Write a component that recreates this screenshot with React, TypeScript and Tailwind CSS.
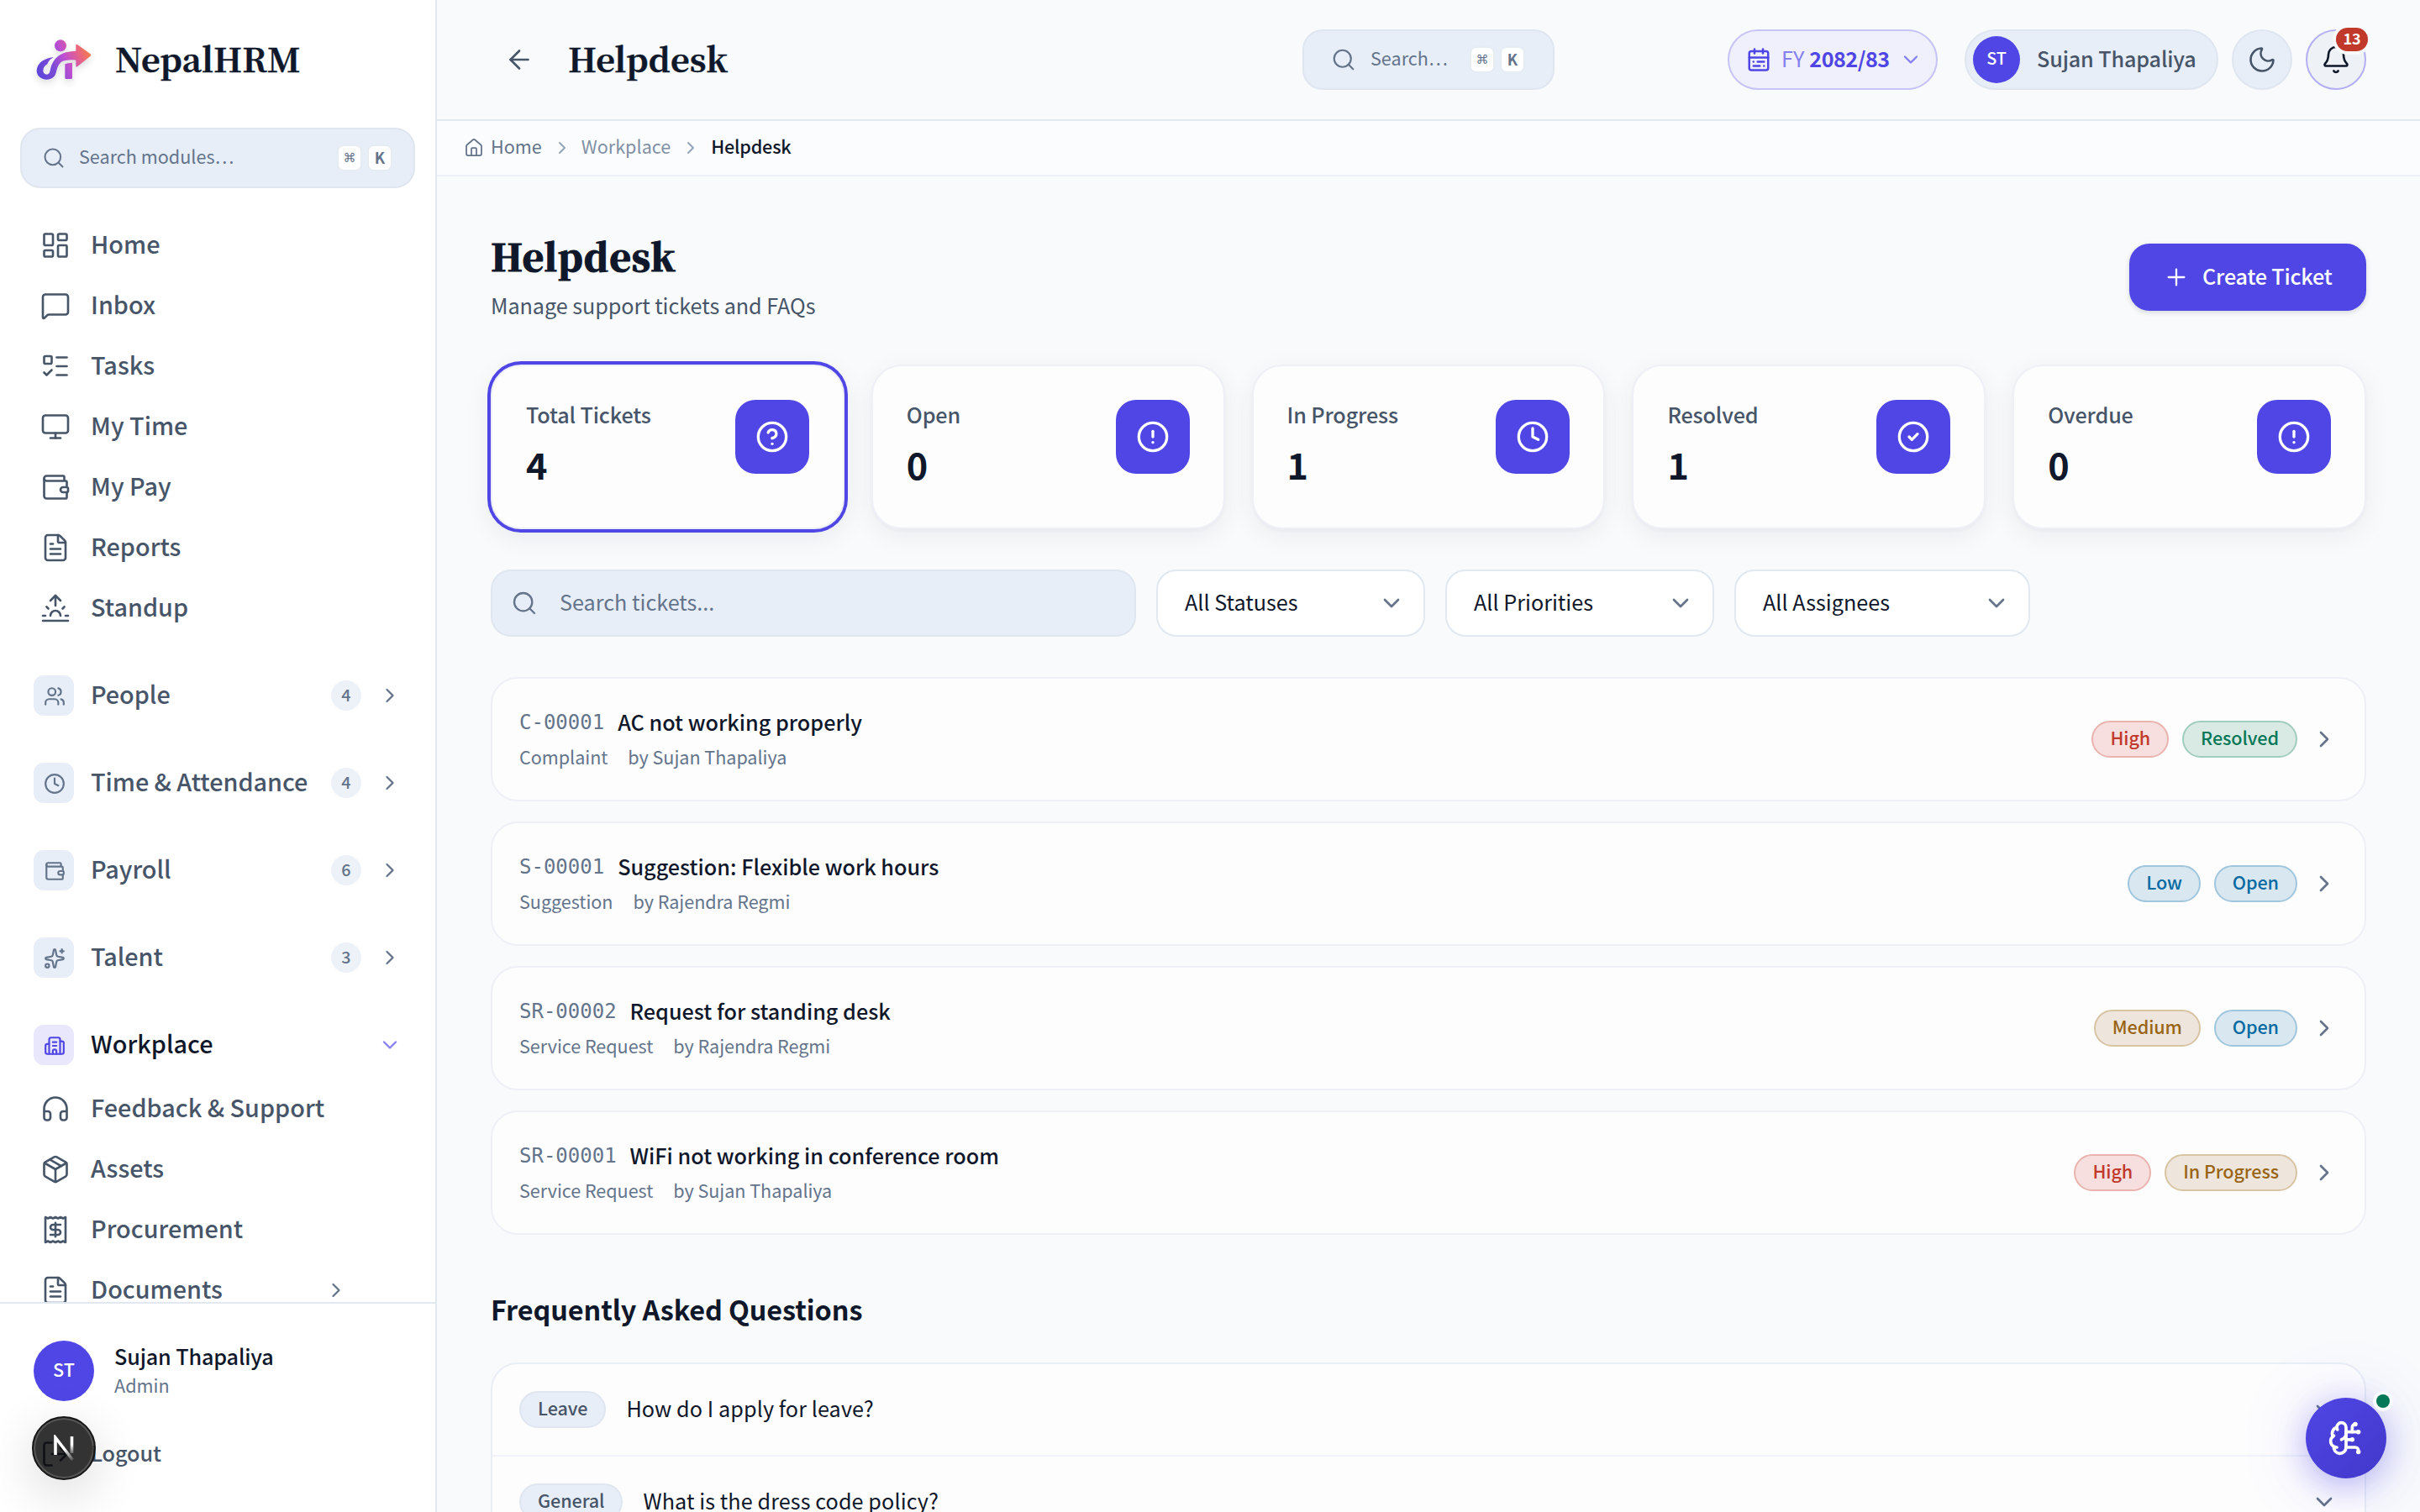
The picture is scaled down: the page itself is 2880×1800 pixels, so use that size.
import { ReactNode } from "react";
import {
  ArrowLeft,
  Bell,
  BrainCircuit,
  Building2,
  CalendarRange,
  ChevronDown,
  ChevronRight,
  CircleAlert,
  CircleCheck,
  CircleQuestionMark,
  Clock,
  FileText,
  Headphones,
  House,
  LayoutDashboard,
  ListTodo,
  LogOut,
  MessageSquare,
  Monitor,
  Moon,
  Package,
  Plus,
  Receipt,
  Search,
  Sparkles,
  Sunrise,
  Users,
  Wallet,
} from "lucide-react";
import clsx from "clsx";

const navigation = [
  { name: "Home", Icon: LayoutDashboard },
  { name: "Inbox", Icon: MessageSquare },
  { name: "Tasks", Icon: ListTodo },
  { name: "My Time", Icon: Monitor },
  { name: "My Pay", Icon: Wallet },
  { name: "Reports", Icon: FileText },
  { name: "Standup", Icon: Sunrise },
];

const groups = [
  { name: "People", count: 4, Icon: Users },
  { name: "Time & Attendance", count: 4, Icon: Clock },
  { name: "Payroll", count: 6, Icon: Wallet },
  { name: "Talent", count: 3, Icon: Sparkles },
];

const workplace = [
  { name: "Feedback & Support", Icon: Headphones },
  { name: "Assets", Icon: Package },
  { name: "Procurement", Icon: Receipt },
  { name: "Documents", Icon: FileText, nested: true },
];

const stats = [
  { label: "Total Tickets", value: 4, Icon: CircleQuestionMark, active: true },
  { label: "Open", value: 0, Icon: CircleAlert },
  { label: "In Progress", value: 1, Icon: Clock },
  { label: "Resolved", value: 1, Icon: CircleCheck },
  { label: "Overdue", value: 0, Icon: CircleAlert },
];

const filters = [
  { label: "All Statuses", width: "w-[320px]" },
  { label: "All Priorities", width: "w-[320px]" },
  { label: "All Assignees", width: "w-[352px]" },
];

const tones = {
  red: "bg-[#f6dfde] border-[#e9b3ae] text-[#c0392b]",
  green: "bg-[#d9eae4] border-[#a1cdbd] text-[#047857]",
  blue: "bg-[#d8e7f0] border-[#a0c6dd] text-[#0369a1]",
  amber: "bg-[#eee6dc] border-[#d8c3a3] text-[#996515]",
  gray: "bg-[#e7eef8] border-[#dfe6f0] text-[#475569]",
};

type Tone = keyof typeof tones;

const tickets: {
  id: string;
  title: string;
  type: string;
  by: string;
  pills: [string, Tone][];
}[] = [
  {
    id: "C-00001",
    title: "AC not working properly",
    type: "Complaint",
    by: "Sujan Thapaliya",
    pills: [["High", "red"], ["Resolved", "green"]],
  },
  {
    id: "S-00001",
    title: "Suggestion: Flexible work hours",
    type: "Suggestion",
    by: "Rajendra Regmi",
    pills: [["Low", "blue"], ["Open", "blue"]],
  },
  {
    id: "SR-00002",
    title: "Request for standing desk",
    type: "Service Request",
    by: "Rajendra Regmi",
    pills: [["Medium", "amber"], ["Open", "blue"]],
  },
  {
    id: "SR-00001",
    title: "WiFi not working in conference room",
    type: "Service Request",
    by: "Sujan Thapaliya",
    pills: [["High", "red"], ["In Progress", "amber"]],
  },
];

const faqs = [
  { category: "Leave", question: "How do I apply for leave?" },
  { category: "General", question: "What is the dress code policy?" },
];

const serif = "font-['Noto_Serif_CJK_SC','Noto_Serif',serif]";

function Logo() {
  return (
    <svg
      width="68"
      height="52"
      viewBox="36 48 204 156"
      fill="none"
      className="drop-shadow-[0_4px_4px_rgba(15,23,42,0.15)] overflow-visible"
    >
      <defs>
        <linearGradient id="logo" x1="42" y1="180" x2="235" y2="90" gradientUnits="userSpaceOnUse">
          <stop offset="0" stopColor="#5b45d9" />
          <stop offset="0.3" stopColor="#7a4bd6" />
          <stop offset="0.55" stopColor="#c04fd0" />
          <stop offset="0.8" stopColor="#ea6480" />
          <stop offset="1" stopColor="#f5853c" />
        </linearGradient>
      </defs>
      <circle cx="126" cy="76" r="21" fill="url(#logo)" />
      <path
        d="M104 117C70 119 42 137 41 165c0 18 14 32 36 32 18 0 30-9 34-28 5-22 14-38 32-40 14-3 27-3 38-1v21q1 5 5 2l47-38q4-4 0-7l-47-34q-5-3-5 2v21c-24 1-47 5-64 19-14 11-23 27-27 46-2 14-6 19-13 19-8 0-13-6-13-13 0-12 6-18 15-24 4-12 12-20 25-26Z"
        fill="url(#logo)"
      />
      <path d="M142 142q8-5 26-5v54q0 4-4 4h-18q-4 0-4-4Z" fill="url(#logo)" />
    </svg>
  );
}

function Kbd({ children }: { children: ReactNode }) {
  return (
    <kbd className="flex items-center justify-center w-[30px] h-8 rounded-lg bg-white border-2 border-[#e6ecf4] text-[18px] leading-7 font-sans text-[#64748b]">
      {children}
    </kbd>
  );
}

function Shortcut() {
  return (
    <span className="flex gap-1.5">
      <Kbd>
        <span className="font-['DejaVu_Sans'] text-[15px] font-normal">⌘</span>
      </Kbd>
      <Kbd>
        <span className="font-['Noto_Sans_CJK_SC'] font-bold pb-0.5">K</span>
      </Kbd>
    </span>
  );
}

function Pill({ tone, children }: { tone: Tone; children: ReactNode }) {
  return (
    <span
      className={clsx(
        "h-11 px-5 pb-1 rounded-full border-2 text-[21.6px] leading-9 font-medium tracking-[-0.1px] whitespace-nowrap",
        tones[tone]
      )}
    >
      {children}
    </span>
  );
}

function Sidebar() {
  return (
    <aside className="flex flex-col w-[520px] h-full shrink-0 bg-white border-r-2 border-[#e2e8f0]">
      <div className="flex items-center gap-[27px] h-[144px] pl-[42px] pb-0.5 shrink-0">
        <Logo />
        <span
          className={clsx(
            serif,
            "text-[39.6px] leading-[56px] pb-1 font-bold text-[#0f172a] [-webkit-text-stroke:0.5px_#0f172a]"
          )}
        >
          NepalHRM
        </span>
      </div>
      <div className="px-6 pt-2 shrink-0">
        <div className="flex items-center h-[72px] pl-6 pr-[25px] rounded-[24px] bg-[#e7eef8] border-2 border-[#dfe6f0] text-[#64748b]">
          <Search size={28} strokeWidth={1.75} />
          <span className="flex-1 pl-4 pb-[5px] text-[21.6px] leading-8">Search modules…</span>
          <Shortcut />
        </div>
      </div>
      <nav className="flex-1 min-h-0 overflow-hidden pt-8 text-[28.8px] leading-10 font-medium text-[#475569]">
        <ul>
          {navigation.map(({ name, Icon }) => (
            <li key={name} className="flex items-center gap-6 h-[72px] pl-12">
              <Icon size={36} strokeWidth={1.75} />
              <span className="pb-[5px]">{name}</span>
            </li>
          ))}
        </ul>
        {groups.map(({ name, count, Icon }) => (
          <div key={name} className="flex items-center h-[72px] mt-8 pl-10 pr-10">
            <span className="flex items-center justify-center w-12 h-12 pl-0.5 pt-0.5 rounded-xl bg-[#e7eef8] text-[#64748b]">
              <Icon size={26} strokeWidth={2} />
            </span>
            <span className="flex-1 pl-5 pb-[5px] tracking-[-0.05px]">{name}</span>
            <span className="w-9 h-9 rounded-full bg-[#edf2f9] text-center text-[19.8px] leading-[33px] text-[#64748b]">
              {count}
            </span>
            <ChevronRight size={28} className="ml-5 text-[#64748b]" />
          </div>
        ))}
        <div className="flex items-center h-[72px] mt-8 pl-10 pr-10 text-[#0f172a]">
          <span className="flex items-center justify-center w-12 h-12 pl-0.5 pt-0.5 rounded-xl bg-[#e9e7fb] text-[#4f46e5]">
            <Building2 size={26} strokeWidth={2} />
          </span>
          <span className="flex-1 pl-5 pb-[5px]">Workplace</span>
          <ChevronDown size={28} className="text-[#8880f0]" />
        </div>
        <ul className="mt-1">
          {workplace.map(({ name, Icon, nested }) => (
            <li key={name} className="flex items-center gap-6 h-[72px] pl-12">
              <Icon size={36} strokeWidth={1.75} />
              <span className="w-[254px] pb-[5px] whitespace-nowrap">{name}</span>
              {nested && <ChevronRight size={28} className="text-[#64748b]" />}
            </li>
          ))}
        </ul>
      </nav>
      <div className="relative h-[250px] shrink-0 border-t-2 border-[#e2e8f0]">
        <div className="flex items-center gap-6 pt-11 pl-10">
          <span className="w-[72px] h-[72px] rounded-full bg-[#4f46e5] text-center text-[21.6px] leading-[68px] font-medium text-white">
            ST
          </span>
          <div className="pb-0.5">
            <p className="text-[25.2px] leading-[36px] font-medium text-[#0f172a] tracking-[-0.15px]">
              Sujan Thapaliya
            </p>
            <p className="text-[21.6px] leading-[34px] text-[#64748b]">Admin</p>
          </div>
        </div>
        <div className="flex items-center gap-6 h-20 mt-[23px] pl-12 text-[25.2px] leading-9 font-medium text-[#475569]">
          <LogOut size={36} strokeWidth={1.75} />
          <span className="pb-1 tracking-[-0.1px]">Logout</span>
        </div>
        <div className="absolute left-[38px] top-[134px] flex items-center justify-center w-[76px] h-[76px] rounded-full bg-black/80 border-2 border-[#171717] shadow-[inset_0_0_0_2px_rgba(255,255,255,0.18),0_16px_64px_-8px_rgba(0,0,0,0.24)]">
          <svg width="28" height="32" viewBox="0 0 28 32" fill="none">
            <defs>
              <linearGradient id="stem" x1="0" y1="2" x2="0" y2="26" gradientUnits="userSpaceOnUse">
                <stop offset="0.4" stopColor="#fff" />
                <stop offset="1" stopColor="#fff" stopOpacity="0" />
              </linearGradient>
              <linearGradient id="diag" x1="14" y1="18" x2="25" y2="31" gradientUnits="userSpaceOnUse">
                <stop stopColor="#fff" />
                <stop offset="1" stopColor="#fff" stopOpacity="0.1" />
              </linearGradient>
            </defs>
            <path d="M4 24V3.500L24.500 30" stroke="url(#diag)" strokeWidth="3.600" />
            <path d="M21.700 2h3.600v20h-3.600Z" fill="url(#stem)" />
          </svg>
        </div>
      </div>
    </aside>
  );
}

function Header() {
  return (
    <header className="flex items-center h-[144px] pl-20 pr-16 shrink-0 border-b-2 border-[#e2e8f0]">
      <ArrowLeft size={36} strokeWidth={1.75} className="text-[#475569]" />
      <h1
        className={clsx(
          serif,
          "flex-1 pl-10 pb-1 text-[39.6px] leading-[56px] font-bold tracking-[0.15px] text-[#0f172a] [-webkit-text-stroke:0.5px_#0f172a]"
        )}
      >
        Helpdesk
      </h1>
      <div className="flex items-center w-[300px] h-[72px] pl-8 pr-[33px] mr-[206px] rounded-[24px] bg-[#e7eef8] border-2 border-[#dfe6f0] text-[#64748b]">
        <Search size={30} strokeWidth={1.75} />
        <span className="flex-1 pl-[17px] pb-1 text-[21.6px] leading-8">Search…</span>
        <Shortcut />
      </div>
      <div className="flex items-center w-[250px] h-[72px] pl-5 mr-8 rounded-full bg-[#eff0fb] border-2 border-[#c6c3f5] text-[25.2px] leading-9 text-[#4f46e5]">
        <CalendarRange size={30} strokeWidth={2} />
        <span className="pl-3 pb-1 text-[#857ff0]">FY</span>
        <span className="flex-1 pl-1.5 pb-1 font-bold tracking-[-0.5px]">2082/83</span>
        <ChevronDown size={28} className="mr-4 text-[#857ff0]" />
      </div>
      <div className="flex items-center w-[302px] h-[72px] pl-2 mr-4 rounded-full bg-[#e7eef8] border-2 border-[#dfe6f0]">
        <span className="w-14 h-14 rounded-full bg-[#4f46e5] text-center text-[19.8px] leading-[52px] font-medium text-white">
          ST
        </span>
        <span className="pl-5 pb-1 text-[25.2px] leading-9 font-medium text-[#475569] tracking-[-0.15px]">
          Sujan Thapaliya
        </span>
      </div>
      <div className="flex items-center justify-center w-[72px] h-[72px] mr-4 rounded-full bg-[#e7eef8] border-2 border-[#dfe6f0] text-[#475569]">
        <Moon size={36} strokeWidth={1.75} />
      </div>
      <div className="relative flex items-center justify-center w-[72px] h-[72px] rounded-full bg-[#eef1f6] border-2 border-[#b3aff2] text-[#0f172a]">
        <Bell size={36} strokeWidth={1.75} />
        <span className="absolute -top-1 -right-1 w-[38px] h-7 rounded-full bg-[#c0392b] ring-4 ring-[#f8fafc] text-center text-[18px] leading-[24px] font-bold text-white">
          13
        </span>
      </div>
    </header>
  );
}

function Breadcrumb() {
  return (
    <div className="flex items-center h-[66px] pl-8 shrink-0 bg-[#fbfcfe] border-b-2 border-[#edf0f6] text-[21.6px] leading-8 text-[#64748b]">
      <House size={24} strokeWidth={1.75} />
      <span className="pl-2 pb-[5px]">Home</span>
      <ChevronRight size={24} className="ml-3 mr-[11px] text-[#94a3b8]" />
      <span className="pb-[5px] text-[#8190a5]">Workplace</span>
      <ChevronRight size={24} className="mx-3 text-[#94a3b8]" />
      <span className="pb-[5px] font-medium tracking-[-0.2px] text-[#0f172a]">Helpdesk</span>
    </div>
  );
}

export default function App() {
  return (
    <div className="relative flex w-[2880px] h-[1800px] overflow-hidden bg-[#f8fafc] font-['Noto_Sans_CJK_SC','Noto_Sans',sans-serif]">
      <Sidebar />
      <div className="flex flex-col flex-1 min-w-0">
        <Header />
        <Breadcrumb />
        <main className="flex-1 min-h-0 overflow-hidden pl-16 pr-16 pt-16">
          <div className="flex items-start justify-between h-[160px]">
            <div>
              <h2
                className={clsx(
                  serif,
                  "text-[44px] leading-[60px] font-black tracking-[0.7px] text-[#0f172a] [-webkit-text-stroke:1px_#0f172a]"
                )}
              >
                Helpdesk
              </h2>
              <p className="pt-[9px] text-[25.2px] leading-10 tracking-[-0.06px] text-[#475569]">
                Manage support tickets and FAQs
              </p>
            </div>
            <button className="flex items-center w-[282px] h-20 mt-4 pl-10 rounded-[24px] bg-[#4f46e5] text-[25.2px] leading-9 font-medium text-white shadow-[0_2px_6px_rgba(15,23,42,0.15)]">
              <Plus size={32} strokeWidth={1.75} />
              <span className="pl-[15px] pb-1 tracking-[-0.2px]">Create Ticket</span>
            </button>
          </div>

          <div className="grid grid-cols-5 gap-8">
            {stats.map(({ label, value, Icon, active }) => (
              <div
                key={label}
                className={clsx(
                  "flex justify-between h-[196px] p-10 rounded-[36px] bg-[#fdfdfe] border-2 border-[#eef0f6]",
                  active
                    ? "shadow-[0_0_0_4px_#4f46e5,0_8px_32px_rgba(15,23,42,0.08)]"
                    : "shadow-[0_2px_4px_rgba(15,23,42,0.03),0_8px_32px_rgba(15,23,42,0.06)]"
                )}
              >
                <div>
                  <p className="text-[25.2px] leading-[34px] font-medium text-[#475569] tracking-[-0.15px]">
                    {label}
                  </p>
                  <p className="pt-2.5 text-[43.2px] leading-[64px] font-bold text-[#0f172a]">{value}</p>
                </div>
                <div className="flex items-center justify-center w-[88px] h-[88px] rounded-[24px] bg-[#4f46e5] text-white">
                  <Icon size={40} strokeWidth={2} />
                </div>
              </div>
            ))}
          </div>

          <div className="flex gap-6 mt-12">
            <div className="flex items-center w-[768px] h-20 pl-[22px] rounded-[24px] bg-[#e7eef8] border-2 border-[#dfe6f0] text-[#64748b]">
              <Search size={32} strokeWidth={1.75} />
              <span className="pl-[26px] pb-1 text-[25.2px] leading-9">Search tickets...</span>
            </div>
            {filters.map(({ label, width }) => (
              <div
                key={label}
                className={clsx(
                  "flex items-center justify-between h-20 pl-8 pr-[22px] rounded-[24px] bg-white border-2 border-[#e2e8f0]",
                  width
                )}
              >
                <span className="pb-1 text-[25.2px] leading-9 text-[#0f172a]">{label}</span>
                <ChevronDown size={32} strokeWidth={2} className="text-[#64748b]" />
              </div>
            ))}
          </div>

          <ul className="flex flex-col gap-6 mt-12">
            {tickets.map(({ id, title, type, by, pills }) => (
              <li
                key={id}
                className="flex items-center gap-4 h-[148px] px-8 rounded-[32px] bg-[#fdfdfe] border-2 border-[#eef0f6]"
              >
                <div className="flex-1 pb-1">
                  <div className="flex items-center gap-4">
                    <span className="pt-0.5 font-['DejaVu_Sans_Mono','Liberation_Mono',monospace] text-[24px] leading-10 text-[#64748b]">
                      {id}
                    </span>
                    <span className="text-[25.2px] leading-10 font-medium text-[#0f172a]">{title}</span>
                  </div>
                  <div className="flex gap-6 pt-[3px] text-[21.6px] leading-9 tracking-[-0.05px] text-[#64748b]">
                    <span>{type}</span>
                    <span>by {by}</span>
                  </div>
                </div>
                {pills.map(([text, tone]) => (
                  <Pill key={text} tone={tone}>
                    {text}
                  </Pill>
                ))}
                <ChevronRight size={32} strokeWidth={2} className="text-[#64748b]" />
              </li>
            ))}
          </ul>

          <h3 className="pt-[60px] text-[32.4px] leading-[56px] font-bold tracking-[-0.1px] text-[#0f172a]">
            Frequently Asked Questions
          </h3>
          <div className="mt-9 rounded-[32px] bg-[#fdfdfe] border-2 border-[#eaeef5]">
            {faqs.map(({ category, question }) => (
              <div
                key={category}
                className="flex items-center h-[110px] px-8 border-b-2 border-[#f0f4f9] text-[#64748b]"
              >
                <Pill tone="gray">{category}</Pill>
                <span className="flex-1 pl-6 pb-[5px] text-[25.2px] leading-9 tracking-[0.08px] text-[#0f172a]">
                  {question}
                </span>
                <ChevronDown size={32} strokeWidth={2} />
              </div>
            ))}
          </div>
        </main>
      </div>

      <button className="absolute left-[2744px] top-[1664px] flex items-center justify-center w-24 h-24 rounded-full bg-linear-to-br from-[#4f46e5] to-[#4338ca] text-white shadow-[0_8px_40px_rgba(79,70,229,0.4),0_4px_96px_rgba(79,70,229,0.12)]">
        <BrainCircuit size={44} strokeWidth={2} />
        <span className="absolute -top-1 -right-1 w-4 h-4 rounded-full bg-[#047857] ring-4 ring-[#f8fafc]" />
      </button>
    </div>
  );
}
